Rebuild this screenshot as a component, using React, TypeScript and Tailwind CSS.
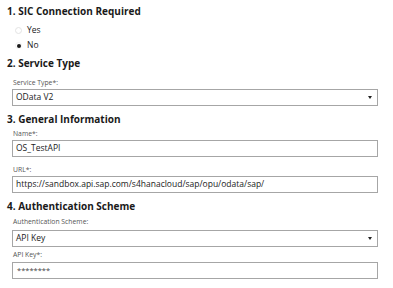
import React from "react";

const font = { fontFamily: '"Open Sans", "Noto Sans", sans-serif' };

function Heading({ children, className = "" }: { children: React.ReactNode; className?: string }) {
  return (
    <div className={"pl-[7px] text-[10px] font-bold leading-[16px] text-[#1a1a1a] " + className}>{children}</div>
  );
}

function Label({ children, className = "" }: { children: React.ReactNode; className?: string }) {
  return <div className={"pl-[13px] text-[6.8px] leading-[12px] text-[#555] " + className}>{children}</div>;
}

function Box({ children, select = false, className = "" }: { children: React.ReactNode; select?: boolean; className?: string }) {
  return (
    <div
      className={
        "ml-[12px] flex h-[17px] w-[366px] items-center justify-between border border-[#a6a6a6] bg-white pl-[3px] pr-[4px] text-[8.5px] leading-none text-[#1a1a1a] " +
        className
      }
    >
      <span>{children}</span>
      {select && (
        <svg width="4" height="3" viewBox="0 0 4 3" className="mr-[1px]">
          <polygon points="0,0 4,0 2,3" fill="#222" />
        </svg>
      )}
    </div>
  );
}

export default function App() {
  return (
    <div className="h-[288px] w-[393px] bg-white" style={font}>
      <div className="flex flex-col pt-[4px]">
        <Heading className="-mt-[1px]">1. SIC Connection Required</Heading>
        <div className="mt-[4px] flex h-[15px] items-center pl-[15px] text-[8.5px] text-[#1a1a1a]">
          <span className="mr-[5px] h-[7px] w-[7px] rounded-full border border-[#e3e3e3]" />
          <span>Yes</span>
        </div>
        <div className="flex h-[15px] items-center pl-[15px] text-[8.5px] text-[#1a1a1a]">
          <span className="mr-[5px] flex h-[7px] w-[7px] items-center justify-center rounded-full border border-[#f2f2f2]">
            <span className="h-[4px] w-[4px] rounded-full bg-[#1a1a1a]" />
          </span>
          <span>No</span>
        </div>
        <Heading className="mt-[2px]">2. Service Type</Heading>
        <Label className="mt-[6px]">Service Type*:</Label>
        <Box select>OData V2</Box>
        <Heading className="mt-[5px]">3. General Information</Heading>
        <Label className="mt-[1px]">Name*:</Label>
        <Box>OS_TestAPI</Box>
        <Label className="mt-[7px]">URL*:</Label>
        <Box>https://sandbox.api.sap.com/s4hanacloud/sap/opu/odata/sap/</Box>
        <Heading className="mt-[5px]">4. Authentication Scheme</Heading>
        <Label className="mt-[2px]">Authentication Scheme:</Label>
        <Box select className="mt-[2px]">API Key</Box>
        <Label className="mt-[2px]">API Key*:</Label>
        <Box className="mt-[1px]">
          <span className="pl-[1px] text-[7.5px] text-[#444]">********</span>
        </Box>
      </div>
    </div>
  );
}
